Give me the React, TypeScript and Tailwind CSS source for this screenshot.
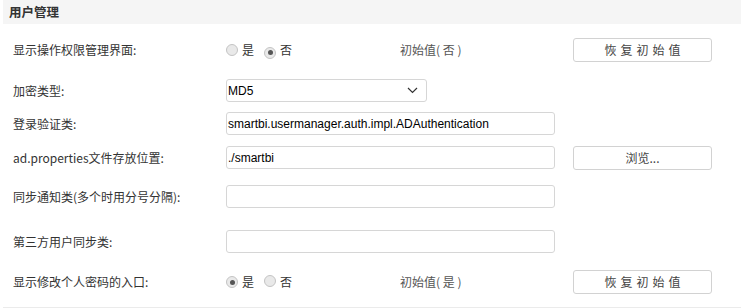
import React from "react";

const font = { fontFamily: '"Noto Sans CJK SC", "Noto Sans", sans-serif' };

function Radio({ checked }: { checked?: boolean }) {
  return (
    <span className="inline-flex h-[12px] w-[12px] items-center justify-center rounded-full border border-[#c4c4c4] bg-[#e9e9e9]">
      {checked && <span className="h-[5px] w-[5px] rounded-full bg-[#555]" />}
    </span>
  );
}

function Label({ children }: { children: React.ReactNode }) {
  return <div className="w-[213px] shrink-0 text-[12px] text-[#333]">{children}</div>;
}

function Input({ value }: { value?: string }) {
  return (
    <div className="flex h-[23px] w-[329px] items-center rounded-[3px] border border-[#d6d6d6] bg-white pl-[1px] text-[12px] text-black [font-family:'Liberation_Sans',Arial,sans-serif]">
      {value}
    </div>
  );
}

function Btn({ children, spaced }: { children: React.ReactNode; spaced?: boolean }) {
  return (
    <div
      className={
        "ml-[18px] flex h-[24px] w-[139px] items-center justify-center rounded-[3px] border border-[#d2d2d2] bg-white text-[12px] text-[#444] " +
        (spaced ? "tracking-[4px] pl-[4px]" : "")
      }
    >
      {children}
    </div>
  );
}

function RadioRow({ yes }: { yes: boolean }) {
  return (
    <div className="flex w-[329px] items-center text-[12px] text-[#333]">
      <Radio checked={yes} />
      <span className="ml-[4px]">是</span>
      <span className="ml-[10px]">
        <Radio checked={!yes} />
      </span>
      <span className="ml-[4px]">否</span>
      <span className="ml-[108px] text-[#555]">{yes ? "初始值( 是 )" : "初始值( 否 )"}</span>
    </div>
  );
}

export default function App() {
  return (
    <div className="h-[308px] w-[741px] bg-white" style={font}>
      <div className="ml-[3px] flex h-[24px] items-center bg-[#f5f5f5] pl-[6px] text-[12.5px] font-bold text-[#333]">
        用户管理
      </div>
      <div className="ml-[3px] border-b border-[#ebebeb] pl-[10px]">
        <div className="mt-[14px] flex h-[24px] items-center">
          <Label>显示操作权限管理界面:</Label>
          <RadioRow yes={false} />
          <Btn spaced>恢复初始值</Btn>
        </div>
        <div className="mt-[17px] flex h-[23px] items-center">
          <Label>加密类型:</Label>
          <div className="flex h-[23px] w-[201px] items-center justify-between rounded-[3px] border border-[#d6d6d6] bg-white pl-[1px] pr-[8px] text-[12px] text-black [font-family:'Liberation_Sans',Arial,sans-serif]">
            <span>MD5</span>
            <svg width="11" height="7" viewBox="0 0 11 7" fill="none">
              <path d="M1 1l4.5 4.5L10 1" stroke="#333" strokeWidth="1.2" />
            </svg>
          </div>
        </div>
        <div className="mt-[10px] flex h-[23px] items-center">
          <Label>登录验证类:</Label>
          <Input value="smartbi.usermanager.auth.impl.ADAuthentication" />
        </div>
        <div className="mt-[11px] flex h-[23px] items-center">
          <Label>ad.properties文件存放位置:</Label>
          <Input value="./smartbi" />
          <Btn>浏览...</Btn>
        </div>
        <div className="mt-[16px] flex h-[23px] items-center">
          <Label>同步通知类(多个时用分号分隔):</Label>
          <Input />
        </div>
        <div className="mt-[22px] flex h-[23px] items-center">
          <Label>第三方用户同步类:</Label>
          <Input />
        </div>
        <div className="mt-[17px] mb-[13px] flex h-[24px] items-center">
          <Label>显示修改个人密码的入口:</Label>
          <RadioRow yes={true} />
          <Btn spaced>恢复初始值</Btn>
        </div>
      </div>
    </div>
  );
}
